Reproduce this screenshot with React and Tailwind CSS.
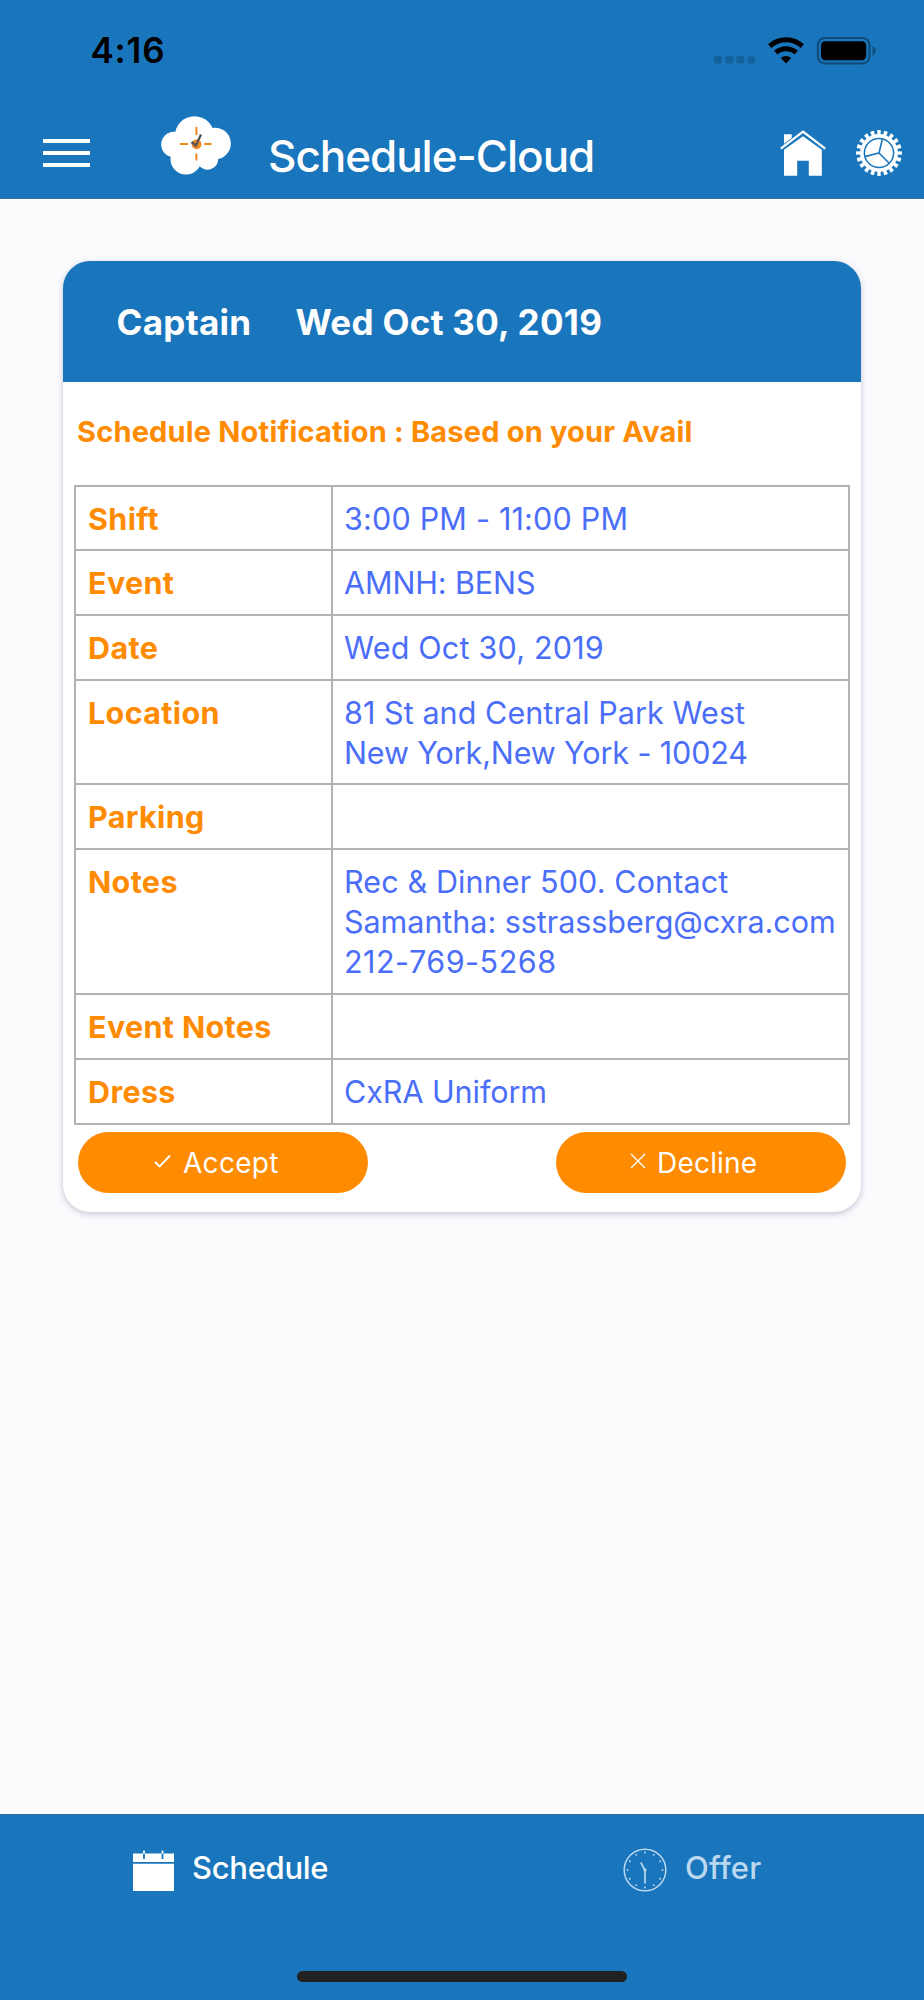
const rows = [
  { label: 'Shift', lines: [{ text: '3:00 PM - 11:00 PM', cls: 'tracking-[0.2px]' }], h: 'h-[64px]' },
  { label: 'Event', lines: [{ text: 'AMNH: BENS', cls: 'tracking-[-0.1px]' }], h: 'h-[65px]' },
  { label: 'Date', lines: [{ text: 'Wed Oct 30, 2019', cls: 'tracking-[0.2px]' }], h: 'h-[65px]' },
  { label: 'Location', lines: [{ text: '81 St and Central Park West', cls: 'tracking-[0.07px]' }, { text: 'New York,New York - 10024', cls: 'tracking-[-0.12px]' }], h: 'h-[104px]' },
  { label: 'Parking', lines: [], h: 'h-[65px]' },
  { label: 'Notes', lines: [{ text: 'Rec & Dinner 500. Contact', cls: 'tracking-[0.12px]' }, { text: 'Samantha: sstrassberg@cxra.com', cls: 'tracking-[-0.04px]' }, { text: '212-769-5268', cls: 'tracking-[0.5px]' }], h: 'h-[145px]' },
  { label: 'Event Notes', lines: [], h: 'h-[65px]' },
  { label: 'Dress', lines: [{ text: 'CxRA Uniform', cls: 'tracking-[-0.05px]' }], h: 'h-[65px]' },
];

function StatusIcons() {
  return (
    <svg className="h-[28px] w-[164px]" viewBox="0 0 164 28">
      <g fill="#14619b">
        <rect x="0" y="19" width="8" height="7.5" rx="2.3" />
        <rect x="11.2" y="19" width="8" height="7.5" rx="2.3" />
        <rect x="22.4" y="19" width="8" height="7.5" rx="2.3" />
        <rect x="33.6" y="19" width="7.5" height="7.5" rx="2.3" />
      </g>
      <g fill="none" stroke="#000" strokeWidth="5">
        <path d="M55.7 9.2A24 24 0 0 1 88.3 9.2" />
        <path d="M61.8 15.6A15.2 15.2 0 0 1 82.2 15.6" />
      </g>
      <path d="M72 26.4L66.8 21A7.6 7.6 0 0 1 77.2 21Z" fill="#000" />
      <rect x="103.9" y="1" width="51.6" height="25.4" rx="7" fill="none" stroke="#114b77" strokeWidth="2" />
      <rect x="107" y="4.2" width="45.2" height="19" rx="4.2" fill="#000" />
      <path d="M158.6 9.3C162.7 11 162.7 17 158.6 18.4Z" fill="#114b77" />
    </svg>
  );
}

function CloudLogo() {
  return (
    <svg className="h-[60px] w-[72px]" viewBox="0 0 72 60">
      <g fill="#fff">
        <circle cx="33.5" cy="20" r="19.7" />
        <circle cx="13" cy="28.5" r="12.8" />
        <circle cx="54" cy="27.5" r="15.8" />
        <circle cx="25" cy="43" r="15.5" />
        <circle cx="46.5" cy="43" r="10.7" />
        <rect x="16" y="20" width="34" height="26" />
      </g>
      <g stroke="#f08a1f" strokeWidth="2">
        <path d="M35.4 11V19M35.4 37.5V44.5M19 28H27M43.2 28H50.5" />
      </g>
      <circle cx="35.6" cy="28.3" r="4.9" fill="#f08a1f" />
      <path d="M30.5 26L34.8 29.6L40 18.6" fill="none" stroke="#555" strokeWidth="2.3" />
    </svg>
  );
}

function HomeIcon() {
  return (
    <svg className="h-[46px] w-[46px]" viewBox="0 0 46 46" fill="#fff">
      <path d="M0.8 18.6L23 1.6L45.2 18.6" fill="none" stroke="#fff" strokeWidth="2.3" />
      <path d="M4 4.2H11.7V8L4 13.8Z" />
      <path d="M4 19.8L23 6.3L41.8 19.8V45.7H28.8V30.7H17.2V45.7H4Z" />
    </svg>
  );
}

function GearIcon() {
  return (
    <svg className="h-[46px] w-[46px]" viewBox="0 0 46 46">
      <circle cx="23" cy="23" r="19" fill="#fff" />
      <circle cx="23" cy="23" r="20.4" fill="none" stroke="#fff" strokeWidth="5" pathLength="200" strokeDasharray="5.4 4.6" strokeDashoffset="2.7" />
      <circle cx="23" cy="23" r="14.6" fill="none" stroke="#1976bc" strokeWidth="1.5" />
      <path d="M23 23L26.4 9M23 23L8.8 26.6M23 23L33 33" stroke="#1976bc" strokeWidth="1.6" />
    </svg>
  );
}

function CalendarIcon() {
  return (
    <svg className="h-[42px] w-[42px]" viewBox="0 0 42 42">
      <path d="M0 3.5H41V12H0ZM0 13.8H41V41H0Z" fill="#fff" />
      <path d="M11 3V9M29.5 3V9" stroke="#1976bc" strokeWidth="1.8" />
      <path d="M11 0.5V3.8M29.5 0.5V3.8" stroke="#fff" strokeWidth="1.8" />
    </svg>
  );
}

function ClockIcon() {
  const dots = Array.from({ length: 12 }, (_, i) => {
    const a = (i * Math.PI) / 6;
    return <circle key={i} cx={22 + 17.5 * Math.sin(a)} cy={22 - 17.5 * Math.cos(a)} r="0.95" fill="#bbd8ef" />;
  });
  return (
    <svg className="h-[44px] w-[44px]" viewBox="0 0 44 44">
      <circle cx="22" cy="22" r="20.8" fill="none" stroke="#bbd8ef" strokeWidth="1.5" />
      {dots}
      <path d="M17.8 14.4L22 22.5V35.5" fill="none" stroke="#bbd8ef" strokeWidth="1.7" />
      <circle cx="22" cy="22" r="1.6" fill="#bbd8ef" />
    </svg>
  );
}

export default function App() {
  return (
    <div className="flex h-[2000px] w-[924px] flex-col bg-[#fafbfd] font-['Inter',sans-serif] whitespace-nowrap">
      <header className="flex h-[199px] flex-col border-b border-[#3474a6] bg-[#1976bc]">
        <div className="flex h-[104px] items-start justify-between pr-[46px] pl-[90.5px]">
          <div className="pt-[28px] text-[35px] leading-[44px] font-semibold tracking-[0.8px] text-black">4:16</div>
          <div className="pt-[37px]"><StatusIcons /></div>
        </div>
        <div className="flex items-start">
          <div className="mt-[35px] ml-[43px] flex w-[47px] flex-col gap-[8px]">
            <div className="h-[4px] bg-white" />
            <div className="h-[4px] bg-white" />
            <div className="h-[4px] bg-white" />
          </div>
          <div className="mt-[12px] ml-[71px]"><CloudLogo /></div>
          <div className="mt-[24px] ml-[35px] w-[330px] text-[44px] leading-[56px] font-medium tracking-[-1.03px] text-white">Schedule-Cloud</div>
          <div className="mt-[26px] ml-[182px]"><HomeIcon /></div>
          <div className="mt-[26px] ml-[29.5px]"><GearIcon /></div>
        </div>
      </header>

      <main className="grow pt-[62px] pl-[62.5px]">
        <section className="h-[951px] w-[798.5px] overflow-hidden rounded-[27px] bg-white shadow-[0_2px_6px_rgba(70,50,120,0.28)]">
          <div className="flex h-[121px] items-center gap-[45px] bg-[#1976bc] pl-[54px] text-[35px] leading-[44px] font-bold tracking-[0.3px] text-white">
            <span className="w-[134px]">Captain</span>
            <span>Wed Oct 30, 2019</span>
          </div>
          <div className="flex h-[103px] items-center pb-[3px] pl-[14.5px] text-[29px] font-bold tracking-[0.18px] text-[#ff8b00]">
            <span>Schedule Notification : Based on your Avail</span>
          </div>
          <div className="ml-[11.5px] w-[776px] border-t-2 border-l-2 border-[#b2b2b2] text-[30.5px] leading-[40.3px]">
            {rows.map((r) => (
              <div key={r.label} className={'flex border-b-2 border-[#b2b2b2] ' + r.h}>
                <div className="w-[256.5px] border-r-2 border-[#b2b2b2] pt-[11.7px] pl-[12px] font-bold tracking-[0.35px] text-[#ff8b00]">{r.label}</div>
                <div className="grow border-r-2 border-[#b2b2b2] pt-[11.7px] pl-[11.5px] text-[#4b6ef9]">
                  {r.lines.map((l) => <div key={l.text}><span className={l.cls}>{l.text}</span></div>)}
                </div>
              </div>
            ))}
          </div>
          <div className="mt-[7px] flex justify-between pr-[15px] pl-[15.5px] text-[28px] text-white">
            <button className="flex h-[61px] w-[290px] items-center rounded-full bg-[#ff8b00] pl-[76px]">
              <svg className="mb-[3px] h-[14px] w-[17px]" viewBox="0 0 17 14"><path d="M1 8L5.6 12.5L16 1.5" fill="none" stroke="#fff" strokeWidth="1.9" /></svg>
              <span className="ml-[12px] tracking-[0.3px]">Accept</span>
            </button>
            <button className="flex h-[61px] w-[290px] items-center rounded-full bg-[#ff8b00] pl-[74px]">
              <svg className="mb-[3px] h-[16px] w-[16px]" viewBox="0 0 16 16"><path d="M1 1L15 15M15 1L1 15" fill="none" stroke="#fff" strokeWidth="1.4" /></svg>
              <span className="ml-[11px] tracking-[0.2px]">Decline</span>
            </button>
          </div>
        </section>
      </main>

      <nav className="flex h-[186px] flex-col border-t border-[#2a6da3] bg-[#1976bc]">
        <div className="flex items-start text-[31px] leading-[40px] font-medium">
          <div className="mt-[35px] ml-[133px]"><CalendarIcon /></div>
          <div className="mt-[33px] ml-[17px] w-[136px] tracking-[-0.3px] text-white">Schedule</div>
          <div className="mt-[33px] ml-[295px]"><ClockIcon /></div>
          <div className="mt-[33px] ml-[18px] tracking-[0.2px] text-[#bbd8ef]">Offer</div>
        </div>
        <div className="mt-[79px] ml-[297px] h-[11px] w-[330px] rounded-full bg-[#222]" />
      </nav>
    </div>
  );
}
